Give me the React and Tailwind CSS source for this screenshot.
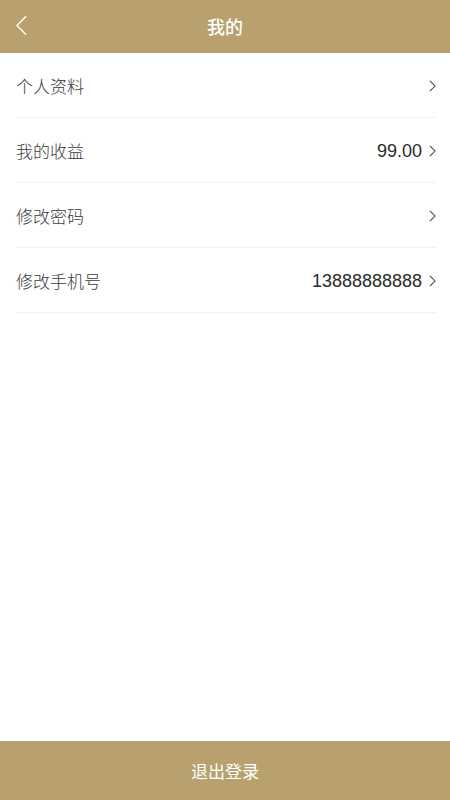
import React from 'react';

const rows = [
    { label: '个人资料', value: '' },
    { label: '我的收益', value: '99.00' },
    { label: '修改密码', value: '' },
    { label: '修改手机号', value: '13888888888' },
];

const Chevron = ({ className }) => (
    <svg viewBox="0 0 8 14" className={className} fill="none" stroke="currentColor" strokeWidth="1.2">
        <path d="M1 1l6 6-6 6" />
    </svg>
);

const App = () => {
    return (
        <div
            className="h-[800px] w-[450px] bg-white flex flex-col"
            style={{ fontFamily: '"Noto Sans CJK SC", "Liberation Sans", sans-serif' }}
        >
            <div className="h-[53px] bg-[#b8a16f] flex items-center relative shrink-0">
                <svg viewBox="0 0 12 22" className="absolute left-[16px] top-[15px] w-[11px] h-[21px] text-white" fill="none" stroke="currentColor" strokeWidth="1.6">
                    <path d="M11 1L1 11l10 10" />
                </svg>
                <h1 className="flex-1 text-center text-white text-[18px] font-medium">我的</h1>
            </div>

            <div className="flex-1 pl-[16px] pr-[14px]">
                {rows.map((row) => (
                    <div key={row.label} className="h-[65px] pt-[2px] flex items-center border-b border-[#f0f0f0]">
                        <span className="flex-1 text-[17px] text-[#3a3a3a] font-light">{row.label}</span>
                        {row.value && (
                            <span className="text-[18px] text-[#2a2a2a] mr-[7px]" style={{ fontFamily: '"Liberation Sans", sans-serif' }}>
                                {row.value}
                            </span>
                        )}
                        <Chevron className="w-[7px] h-[12px] text-[#444]" />
                    </div>
                ))}
            </div>

            <button className="h-[59px] shrink-0 bg-[#b8a16f] text-white text-[17px]">退出登录</button>
        </div>
    );
};

export default App;
